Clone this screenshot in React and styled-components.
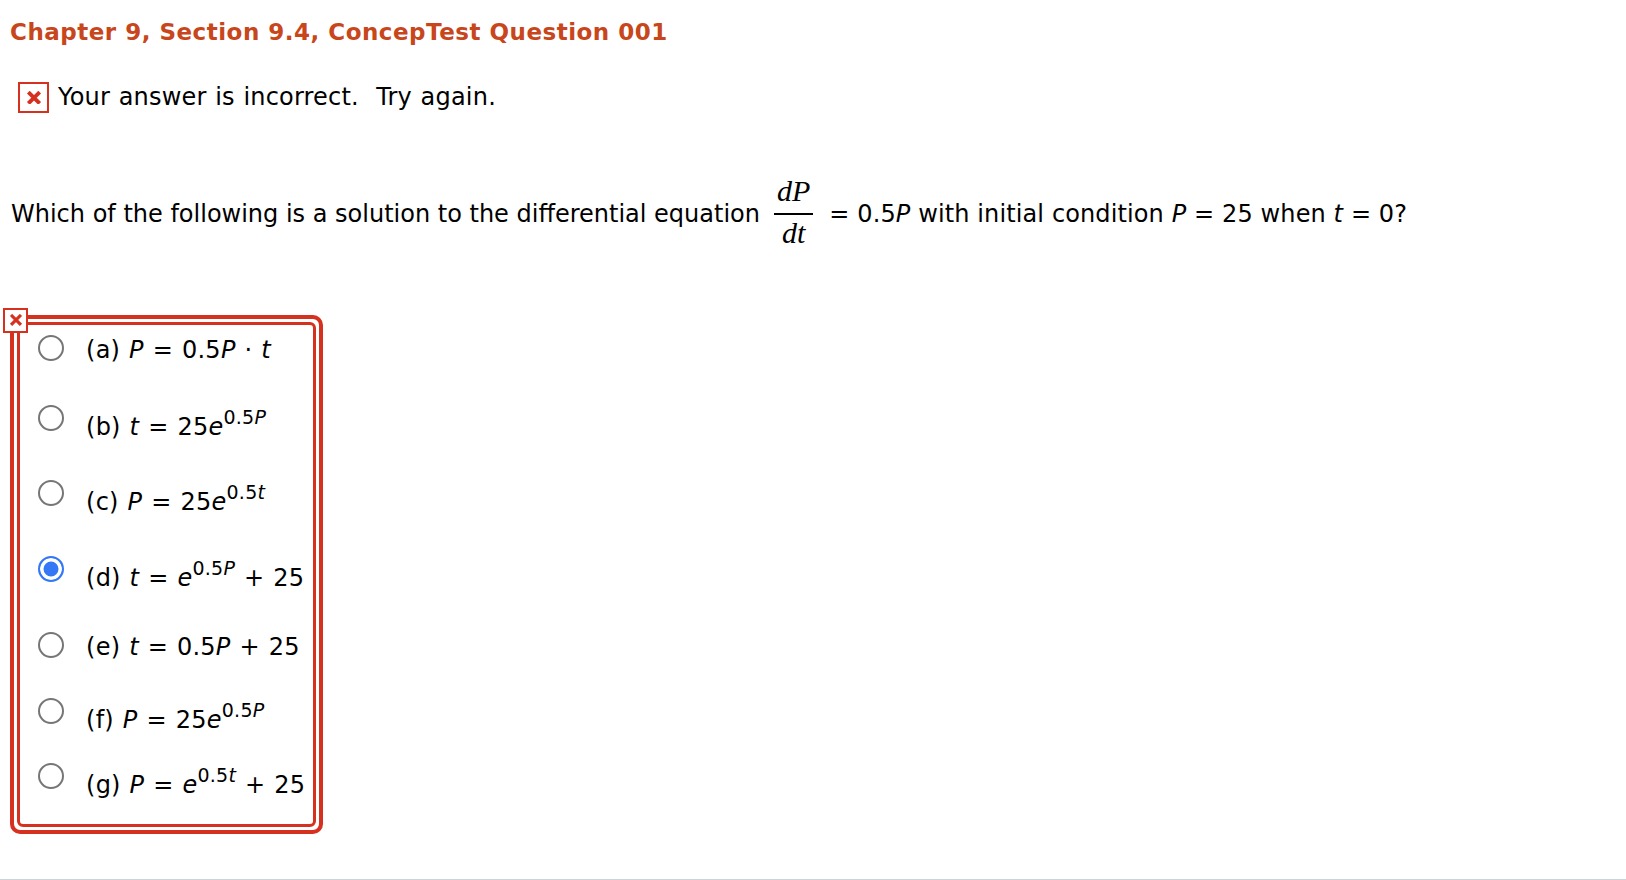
import React from 'react'
import styled, { createGlobalStyle } from 'styled-components'

const GlobalStyle = createGlobalStyle`
  html, body {
    margin: 0;
    padding: 0;
    background: #fff;
  }
  body {
    font-family: "DejaVu Sans", Verdana, sans-serif;
    color: #000;
  }
`

function Cross({ size, weight = 3 }) {
  return (
    <svg width={size} height={size * 0.85} viewBox="0 0 14 12">
      <path d="M2 1 L12 11 M12 1 L2 11" stroke="#d6301f" strokeWidth={weight} fill="none" />
    </svg>
  )
}

function App() {
  // built here so the styled parts below are defined already
  const choices = [
    { id: 'a', lhs: 'P', rhs: <>0.5<I>P</I> · <I>t</I></>, after: 41 },
    { id: 'b', lhs: 't', rhs: <>25<I>e</I><Sup>0.5<I>P</I></Sup></>, after: 39 },
    { id: 'c', lhs: 'P', rhs: <>25<I>e</I><Sup>0.5<I>t</I></Sup></>, after: 40 },
    { id: 'd', lhs: 't', rhs: <><I>e</I><Sup>0.5<I>P</I></Sup> + 25</>, after: 40, checked: true },
    { id: 'e', lhs: 't', rhs: <>0.5<I>P</I> + 25</>, after: 37 },
    { id: 'f', lhs: 'P', rhs: <>25<I>e</I><Sup>0.5<I>P</I></Sup></>, after: 29 },
    { id: 'g', lhs: 'P', rhs: <><I>e</I><Sup>0.5<I>t</I></Sup> + 25</>, after: 0 },
  ]

  return (
    <>
      <GlobalStyle />
      <Page>
        <Title>Chapter 9, Section 9.4, ConcepTest Question 001</Title>

        <Feedback>
          <FeedbackIcon>
            <Cross size={16} weight={3.4} />
          </FeedbackIcon>
          <span>Your answer is incorrect.&nbsp; Try again.</span>
        </Feedback>

        <Question>
          <span>Which of the following is a solution to the differential equation</span>
          <Fraction>
            <Num>dP</Num>
            <Bar />
            <Den>dt</Den>
          </Fraction>
          <Tail>= 0.5<I>P</I> with initial condition <I>P</I> = 25 when <I>t</I> = 0?</Tail>
        </Question>

        <ChoicesWrap>
          <Badge>
            <Cross size={14} weight={3.2} />
          </Badge>
          <Frame>
            <Inner>
              {choices.map((c) => (
                <Option key={c.id} $after={c.after}>
                  <Radio $checked={c.checked} />
                  <Label>
                    ({c.id}) <I>{c.lhs}</I> = {c.rhs}
                  </Label>
                </Option>
              ))}
            </Inner>
          </Frame>
        </ChoicesWrap>
      </Page>
      <Divider />
    </>
  )
}

export default App

const Page = styled.div`
  padding: 20px 10px 0 10px;
`

const Title = styled.h1`
  margin: 0;
  font-size: 23px;
  line-height: 25px;
  letter-spacing: 0.5px;
  font-weight: bold;
  color: #c8461b;
`

const Feedback = styled.div`
  display: flex;
  align-items: center;
  margin-top: 37px;
  margin-left: 8px;
  font-size: 24px;
  line-height: 31px;

  span {
    margin-left: 9px;
    letter-spacing: 0.2px;
    word-spacing: 0.8px;
  }
`

const FeedbackIcon = styled.div`
  width: 31px;
  height: 31px;
  box-sizing: border-box;
  border: 2px solid #d6301f;
  display: flex;
  align-items: center;
  justify-content: center;
  background: #fff;
`

const Question = styled.div`
  display: flex;
  align-items: center;
  margin-top: 61px;
  margin-left: 1px;
  font-size: 24px;
  white-space: nowrap;
`

const Tail = styled.span`
  letter-spacing: 0.12px;
`

const I = styled.i`
  font-style: italic;
`

const Fraction = styled.div`
  display: flex;
  flex-direction: column;
  align-items: stretch;
  margin: 0 16px 0 14px;
  padding-bottom: 5px;
  font-family: "Liberation Serif", "Times New Roman", serif;
  font-style: italic;
  font-size: 30px;
  line-height: 33px;
  text-align: center;
`

const Num = styled.div`
  padding: 0 3px;
  margin-bottom: 6px;
`

const Bar = styled.div`
  height: 1.5px;
  background: #000;
`

const Den = styled.div`
  padding: 0 3px;
  margin-top: 1px;
`

const ChoicesWrap = styled.div`
  position: relative;
  display: inline-block;
  margin-top: 61px;
`

const Badge = styled.div`
  position: absolute;
  left: -7px;
  top: -7px;
  width: 25px;
  height: 25px;
  box-sizing: border-box;
  border: 2px solid #d6301f;
  background: #fff;
  display: flex;
  align-items: center;
  justify-content: center;
`

const Frame = styled.div`
  border: 4px solid #d6301f;
  border-radius: 10px;
  padding: 3px;
`

const Inner = styled.div`
  border: 3.5px solid #d6301f;
  border-radius: 6px;
  padding: 10px 8px 25px 18px;
`

const Option = styled.div`
  display: flex;
  align-items: flex-start;
  margin-bottom: ${(p) => p.$after}px;
`

const Radio = styled.span`
  flex: none;
  width: 26px;
  height: 26px;
  box-sizing: border-box;
  border-radius: 50%;
  border: ${(p) => (p.$checked ? '2.5px solid #3478f6' : '2px solid #767676')};
  background: ${(p) => (p.$checked ? '#3478f6' : '#fff')};
  box-shadow: ${(p) => (p.$checked ? 'inset 0 0 0 3.5px #fff' : 'none')};
`

const Label = styled.span`
  margin-left: 22px;
  margin-top: 1px;
  font-size: 24px;
  line-height: normal;
  letter-spacing: 0.25px;
  word-spacing: 1px;
  white-space: nowrap;
`

const Sup = styled.span`
  font-size: 19px;
  vertical-align: 11px;
  word-spacing: 0;
`

const Divider = styled.div`
  margin-top: 45px;
  height: 3px;
  background: #cdd4de;
`
